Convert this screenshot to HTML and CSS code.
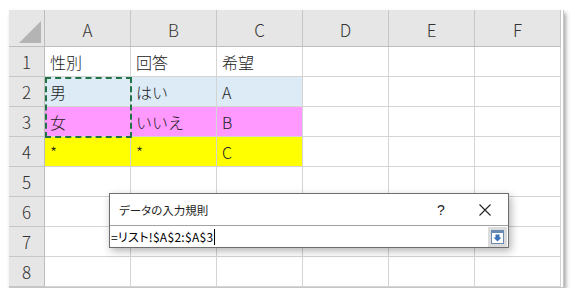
FILE: index.html
```html
<!DOCTYPE html>
<html lang="ja">
<head>
    <meta charset="UTF-8">
    <title>データの入力規則</title>
    <link rel="stylesheet" href="styles.css">
</head>
<body>
    <div class="sheet">
        <div class="grid">
            <div class="corner"><span class="tri"></span></div>
            <div class="col-head">A</div>
            <div class="col-head">B</div>
            <div class="col-head">C</div>
            <div class="col-head">D</div>
            <div class="col-head">E</div>
            <div class="col-head">F</div>

            <div class="row-head">1</div>
            <div class="cell">性別</div>
            <div class="cell">回答</div>
            <div class="cell">希望</div>
            <div class="cell"></div>
            <div class="cell"></div>
            <div class="cell"></div>

            <div class="row-head">2</div>
            <div class="cell blue">男</div>
            <div class="cell blue">はい</div>
            <div class="cell blue">A</div>
            <div class="cell"></div>
            <div class="cell"></div>
            <div class="cell"></div>

            <div class="row-head">3</div>
            <div class="cell pink">女</div>
            <div class="cell pink">いいえ</div>
            <div class="cell pink">B</div>
            <div class="cell"></div>
            <div class="cell"></div>
            <div class="cell"></div>

            <div class="row-head">4</div>
            <div class="cell yellow">*</div>
            <div class="cell yellow">*</div>
            <div class="cell yellow">C</div>
            <div class="cell"></div>
            <div class="cell"></div>
            <div class="cell"></div>

            <div class="row-head">5</div>
            <div class="cell"></div><div class="cell"></div><div class="cell"></div>
            <div class="cell"></div><div class="cell"></div><div class="cell"></div>

            <div class="row-head">6</div>
            <div class="cell"></div><div class="cell"></div><div class="cell"></div>
            <div class="cell"></div><div class="cell"></div><div class="cell"></div>

            <div class="row-head">7</div>
            <div class="cell"></div><div class="cell"></div><div class="cell"></div>
            <div class="cell"></div><div class="cell"></div><div class="cell"></div>

            <div class="row-head">8</div>
            <div class="cell"></div><div class="cell"></div><div class="cell"></div>
            <div class="cell"></div><div class="cell"></div><div class="cell"></div>
        </div>

        <!-- copy marquee around A2:A3 -->
        <div class="marquee"></div>

        <div class="dialog">
            <div class="dialog-title">
                <span class="title-text">データの入力規則</span>
                <span class="help">?</span>
                <span class="close">
                    <svg width="12" height="12" viewBox="0 0 12 12">
                        <path d="M0.5 0.5 L11.5 11.5 M11.5 0.5 L0.5 11.5" stroke="#222" stroke-width="1.1" fill="none"/>
                    </svg>
                </span>
            </div>
            <div class="dialog-input">
                <span class="formula">=リスト!$A$2:$A$3</span><span class="caret"></span>
                <span class="collapse-btn">
                    <svg width="13" height="14" viewBox="0 0 13 14">
                        <rect x="0.5" y="0.5" width="12" height="13" fill="#fff" stroke="#6a8ab0"/>
                        <rect x="0.5" y="0.5" width="12" height="2.5" fill="#6a8ab0"/>
                        <path d="M4.5 4.5 H8.5 V7.5 H10.5 L6.5 11.5 L2.5 7.5 H4.5 Z" fill="#3d72b4"/>
                    </svg>
                </span>
            </div>
        </div>
    </div>
</body>
</html>
```

FILE: styles.css
```css
* {
    margin: 0;
    padding: 0;
    box-sizing: border-box;
}

body {
    background: #fff;
    font-family: "Noto Sans CJK JP", "Noto Sans", sans-serif;
    color: #222;
}

.sheet {
    position: relative;
    width: 555px;
    margin: 10px 0 0 9px;
    box-shadow: 2px 3px 4px rgba(0, 0, 0, 0.35);
}

.grid {
    display: grid;
    grid-template-columns: 36px repeat(6, 86px);
    grid-template-rows: 37px repeat(8, 30px);
    border-right: 1px solid #c6c6c6;
    border-bottom: 1px solid #c6c6c6;
    background: #fff;
}

.corner {
    background: #e6e6e6;
    border-right: 1px solid #bdbdbd;
    border-bottom: 1px solid #bdbdbd;
    position: relative;
}

.tri {
    position: absolute;
    right: 3px;
    bottom: 3px;
    width: 0;
    height: 0;
    border-left: 22px solid transparent;
    border-bottom: 22px solid #b4b4b4;
}

.col-head {
    background: #e6e6e6;
    border-right: 1px solid #c6c6c6;
    border-bottom: 1px solid #bdbdbd;
    display: flex;
    align-items: center;
    justify-content: center;
    font-size: 17px;
    font-weight: 300;
    color: #333;
    padding-top: 3px;
}

.row-head {
    background: #e6e6e6;
    border-right: 1px solid #bdbdbd;
    border-bottom: 1px solid #c6c6c6;
    display: flex;
    align-items: center;
    justify-content: center;
    font-size: 17px;
    font-weight: 300;
    color: #333;
}

.cell {
    border-right: 1px solid #d4d4d4;
    border-bottom: 1px solid #d4d4d4;
    font-size: 16px;
    font-weight: 300;
    line-height: 30px;
    padding-left: 5px;
    color: #222;
}

.blue {
    background: #ddebf7;
}

.pink {
    background: #ff99ff;
}

.yellow {
    background: #ffff00;
}

.marquee {
    position: absolute;
    left: 36px;
    top: 67px;
    width: 87px;
    height: 61px;
    border: 2px dashed #217346;
}

.dialog {
    position: absolute;
    left: 100px;
    top: 183px;
    width: 400px;
    height: 55px;
    background: #fff;
    border: 1px solid #6e6e6e;
    box-shadow: 2px 3px 8px rgba(0, 0, 0, 0.3);
    font-feature-settings: "palt";
}

.dialog-title {
    height: 31px;
    display: flex;
    align-items: center;
    padding-left: 9px;
    font-size: 11.5px;
    color: #222;
}

.title-text {
    flex: 1;
}

.help {
    width: 16px;
    margin-right: 26px;
    font-size: 14px;
    font-family: "Liberation Sans", sans-serif;
    color: #222;
}

.close {
    display: flex;
    margin-right: 17px;
}

.dialog-input {
    height: 22px;
    border-top: 1px solid #a0a0a0;
    display: flex;
    align-items: center;
    padding-left: 1px;
    font-size: 12px;
    color: #000;
}

.formula {
    letter-spacing: 0.3px;
}

.caret {
    width: 1px;
    height: 16px;
    background: #000;
    margin-left: 1px;
}

.collapse-btn {
    margin-left: auto;
    margin-right: 1px;
    width: 19px;
    height: 20px;
    background: #dcdcdc;
    display: flex;
    align-items: center;
    justify-content: center;
}
```
